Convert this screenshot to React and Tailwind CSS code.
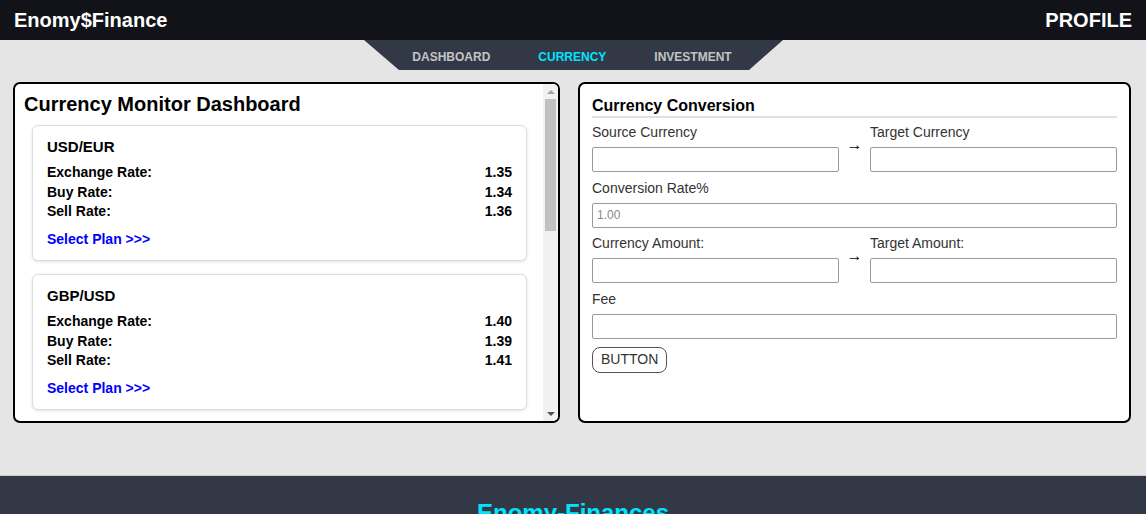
const pairs = [
  { name: "USD/EUR", exchange: "1.35", buy: "1.34", sell: "1.36" },
  { name: "GBP/USD", exchange: "1.40", buy: "1.39", sell: "1.41" },
  { name: "USD/JPY", exchange: "110.25", buy: "110.10", sell: "110.40" },
  { name: "EUR/GBP", exchange: "0.86", buy: "0.85", sell: "0.87" },
  { name: "AUD/USD", exchange: "0.75", buy: "0.74", sell: "0.76" },
];

function RateCard({ pair }) {
  return (
    <div className="shrink-0 rounded-md border border-[#dddddd] bg-white px-[14px] pt-[12px] pb-[11px] shadow-[0_1px_3px_rgba(0,0,0,0.12)]">
      <h3 className="text-[15px] leading-[18px] font-bold text-black">{pair.name}</h3>
      <div className="mt-[7px] text-[14px] leading-[19.5px] font-bold text-black">
        <div className="flex justify-between">
          <span>Exchange Rate:</span>
          <span>{pair.exchange}</span>
        </div>
        <div className="flex justify-between">
          <span>Buy Rate:</span>
          <span>{pair.buy}</span>
        </div>
        <div className="flex justify-between">
          <span>Sell Rate:</span>
          <span>{pair.sell}</span>
        </div>
      </div>
      <a href="#" className="mt-[8px] block text-[14px] leading-[19.5px] font-bold text-[#0000ff]">
        Select Plan &gt;&gt;&gt;
      </a>
    </div>
  );
}

// classic scrollbar look (headless browser draws overlay scrollbars)
function ScrollBar() {
  return (
    <div className="flex w-[15px] shrink-0 flex-col bg-[#f1f1f1]">
      <div className="flex h-[15px] items-center justify-center">
        <div className="h-0 w-0 border-x-[4px] border-b-[4px] border-x-transparent border-b-[#a3a3a3]" />
      </div>
      <div className="flex-1">
        <div className="mx-[2px] h-[132px] bg-[#c1c1c1]" />
      </div>
      <div className="flex h-[15px] items-center justify-center">
        <div className="h-0 w-0 border-x-[4px] border-t-[4px] border-x-transparent border-t-[#505050]" />
      </div>
    </div>
  );
}

function Field({ label, placeholder }) {
  return (
    <div className="flex flex-1 flex-col">
      <label className="text-[14px] leading-[16px] text-[#333333]">{label}</label>
      <input
        type="text"
        placeholder={placeholder}
        className="mt-[7px] h-[25px] w-full rounded-[2px] border border-[#9a9a9a] bg-white px-[4px] text-[12px] text-[#333] placeholder:text-[#8a8a8a] focus:outline-none"
      />
    </div>
  );
}

function PairRow({ left, right }) {
  return (
    <div className="flex items-center">
      <Field label={left} />
      <span className="w-[31px] pb-[7px] text-center text-[16px] leading-[16px] text-black">→</span>
      <Field label={right} />
    </div>
  );
}

export default function App() {
  return (
    <div className="min-h-screen bg-[#e5e5e5] font-['Liberation_Sans',Arial,sans-serif]">
      {/* Top bar */}
      <header className="flex h-[40px] items-center justify-between bg-[#111318] px-[14px]">
        <span className="text-[20px] font-bold text-white">Enomy$Finance</span>
        <span className="text-[20px] font-bold text-white">PROFILE</span>
      </header>

      {/* Tabs */}
      <div className="flex justify-center pl-[1px]">
        <nav className="flex h-[30px] w-[419px] items-center justify-center bg-[#323846] pt-[4px] pr-[3px] [clip-path:polygon(0_0,100%_0,91.9%_100%,8.35%_100%)]">
          <a href="#" className="px-[24px] text-[12px] font-bold text-[#c4c4c4]">DASHBOARD</a>
          <a href="#" className="px-[24px] text-[12px] font-bold text-[#00e5ff]">CURRENCY</a>
          <a href="#" className="px-[24px] text-[12px] font-bold text-[#c4c4c4]">INVESTMENT</a>
        </nav>
      </div>

      {/* Panels */}
      <main className="grid grid-cols-[547px_553px] gap-[18px] pt-[12px] pr-[15px] pb-[52px] pl-[13px]">
        <section className="flex h-[341px] overflow-hidden rounded-[7px] border-2 border-black bg-white">
          <div className="flex min-w-0 flex-1 flex-col overflow-hidden">
            <h2 className="shrink-0 px-[9px] pt-[8px] pb-[9px] text-[20px] leading-[24px] font-bold text-black">
              Currency Monitor Dashboard
            </h2>
            <div className="flex flex-col gap-[13px] pr-[16px] pb-[14px] pl-[17px]">
              {pairs.map((p) => (
                <RateCard key={p.name} pair={p} />
              ))}
            </div>
          </div>
          <ScrollBar />
        </section>

        <section className="h-[341px] rounded-[7px] border-2 border-black bg-white px-[12px] pt-[12px]">
          <h2 className="border-b-2 border-[#e0e0e0] text-[16px] leading-[20px] font-bold text-black">
            Currency Conversion
          </h2>
          <div className="mt-[6px] flex flex-col gap-[7.5px]">
            <PairRow left="Source Currency" right="Target Currency" />
            <Field label="Conversion Rate%" placeholder="1.00" />
            <PairRow left="Currency Amount:" right="Target Amount:" />
            <Field label="Fee" />
          </div>
          <button className="mt-[8px] h-[26px] rounded-lg border border-[#555] bg-white px-[8px] text-[14px] text-[#333]">
            BUTTON
          </button>
        </section>
      </main>

      {/* Footer */}
      <footer className="border-t border-[#cfcfcf] bg-[#323846] pt-[23px] pb-[40px] text-center">
        <h2 className="text-[24px] leading-[28px] font-bold text-[#00e5ff]">Enomy-Finances</h2>
        <p className="mt-[10px] text-[14px] text-[#c4c4c4]">© Enomy-Finances. All rights reserved.</p>
      </footer>
    </div>
  );
}
